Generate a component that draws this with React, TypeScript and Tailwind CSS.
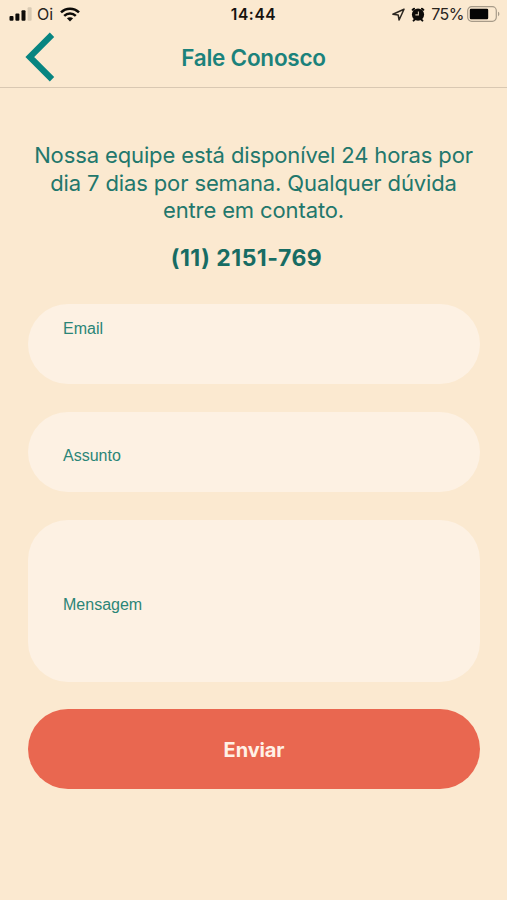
import type { ReactNode } from "react";

function SignalIcon() {
    return (
        <svg width="23" height="14" viewBox="0 0 23 14">
            <rect x="0.5" y="9" width="4" height="4.7" rx="1" fill="#0d0b08" />
            <rect x="6.4" y="6.5" width="4" height="7.2" rx="1" fill="#0d0b08" />
            <rect x="12.5" y="3.2" width="4" height="10.5" rx="1" fill="#0d0b08" />
            <rect x="18.6" y="0.2" width="4" height="13.5" rx="1" fill="#d9cab3" />
        </svg>
    );
}

function WifiIcon() {
    return (
        <svg width="20" height="15" viewBox="0 0 20 15" fill="none" stroke="#0d0b08" strokeWidth="2.5">
            <path d="M1 5.4C6 0.4 14 0.4 19 5.4" />
            <path d="M4.2 8.8C7.5 5.6 12.5 5.6 15.8 8.8" />
            <path d="M10 14.4L6.9 11.3C8.7 9.8 11.3 9.8 13.1 11.3Z" fill="#0d0b08" stroke="none" />
        </svg>
    );
}

function LocationIcon() {
    return (
        <svg width="13" height="13" viewBox="0 0 13 13" fill="none" stroke="#2b2620" strokeWidth="1.5" strokeLinejoin="round">
            <path d="M12 1.2L0.9 6.2L6.2 7L7.1 12Z" />
        </svg>
    );
}

function AlarmIcon() {
    return (
        <svg width="14" height="15" viewBox="0 0 14 15">
            <path d="M1.7 2.8L3 1.7M12.3 2.8L11 1.7M2.6 13.6L3.6 12.6M11.4 13.6L10.4 12.6" stroke="#0d0b08" strokeWidth="2" strokeLinecap="round" />
            <circle cx="7" cy="7.6" r="6.1" fill="#0d0b08" />
            <path d="M7.4 4.4V7.9H4.4" fill="none" stroke="#d9cab3" strokeWidth="1.1" />
        </svg>
    );
}

function BatteryIcon() {
    return (
        <svg width="33" height="16" viewBox="0 0 33 16">
            <rect x="0.7" y="0.7" width="28.6" height="14.6" rx="4" fill="none" stroke="#a79b89" strokeWidth="1.2" />
            <rect x="2.8" y="2.8" width="18.4" height="10.4" rx="1.2" fill="#050505" />
            <path d="M31 5.8C32.8 6.4 32.8 9.6 31 10.2Z" fill="#a79b89" />
        </svg>
    );
}

function StatusBar() {
    return (
        <div className="grid h-[28px] grid-cols-3 items-center text-[#29241d]">
            <div className="flex items-center pl-[9px]">
                <SignalIcon />
                <span className="ml-[5px] w-[17px] text-[16px] leading-none">Oi</span>
                <span className="ml-[6px]">
                    <WifiIcon />
                </span>
            </div>
            <span className="pt-[2px] text-center text-[15.5px] leading-none font-semibold tracking-[0.6px] text-[#16120e]">14:44</span>
            <div className="flex items-center justify-end pr-[7px]">
                <LocationIcon />
                <span className="ml-[6px]">
                    <AlarmIcon />
                </span>
                <span className="mr-[3px] ml-[6px] text-[16px] leading-none tracking-[-0.5px]">75%</span>
                <BatteryIcon />
            </div>
        </div>
    );
}

function Header() {
    return (
        <header className="grid h-[60px] grid-cols-[1fr_auto_1fr] border-b border-[#d9c8b2]">
            <button className="flex pt-[4px] pl-[25px]" aria-label="Voltar">
                <svg width="30" height="50" viewBox="0 0 30 50" fill="none" stroke="#078581" strokeWidth="6.2">
                    <path d="M27 2.8L4.8 25L27 47.2" />
                </svg>
            </button>
            <h1 className="pt-[15px] text-[22.5px] leading-[30px] font-semibold tracking-[-0.25px] text-[#1b827b]">Fale Conosco</h1>
            <span />
        </header>
    );
}

function Field({ label, className }: { label: ReactNode; className: string }) {
    return (
        <label className={`block rounded-[40px] bg-[#fdf1e3] pl-[35px] font-['Liberation_Sans',sans-serif] text-[16px] leading-[20px] text-[#2b8577] ${className}`}>
            {label}
        </label>
    );
}

export default function App() {
    return (
        <div className="h-[900px] w-[507px] overflow-hidden bg-[#fbe9d0] font-['Inter',sans-serif]">
            <StatusBar />
            <Header />
            <main className="px-[28px] pt-[54.4px]">
                <p className="text-center text-[22px] leading-[27.3px] tracking-[-0.12px] whitespace-nowrap text-[#22776c]">
                    Nossa equipe está disponível 24 horas por
                    <br />
                    dia 7 dias por semana. Qualquer dúvida
                    <br />
                    entre em contato.
                </p>
                <p className="mt-[18.7px] pr-[14px] text-center text-[23px] leading-[30px] font-bold tracking-[0.5px] text-[#176c63]">(11) 2151-769</p>
                <form className="mt-[31px] flex w-[452px] flex-col">
                    <Field label="Email" className="h-[80px] pt-[15px]" />
                    <Field label="Assunto" className="mt-[28px] h-[80px] pt-[34px]" />
                    <Field label="Mensagem" className="mt-[28px] h-[162px] pt-[75px]" />
                    <button type="button" className="mt-[27px] h-[80px] rounded-full bg-[#e96750] pt-[2px] text-[20px] font-bold tracking-[-0.1px] text-[#fff1e6]">
                        Enviar
                    </button>
                </form>
            </main>
        </div>
    );
}
